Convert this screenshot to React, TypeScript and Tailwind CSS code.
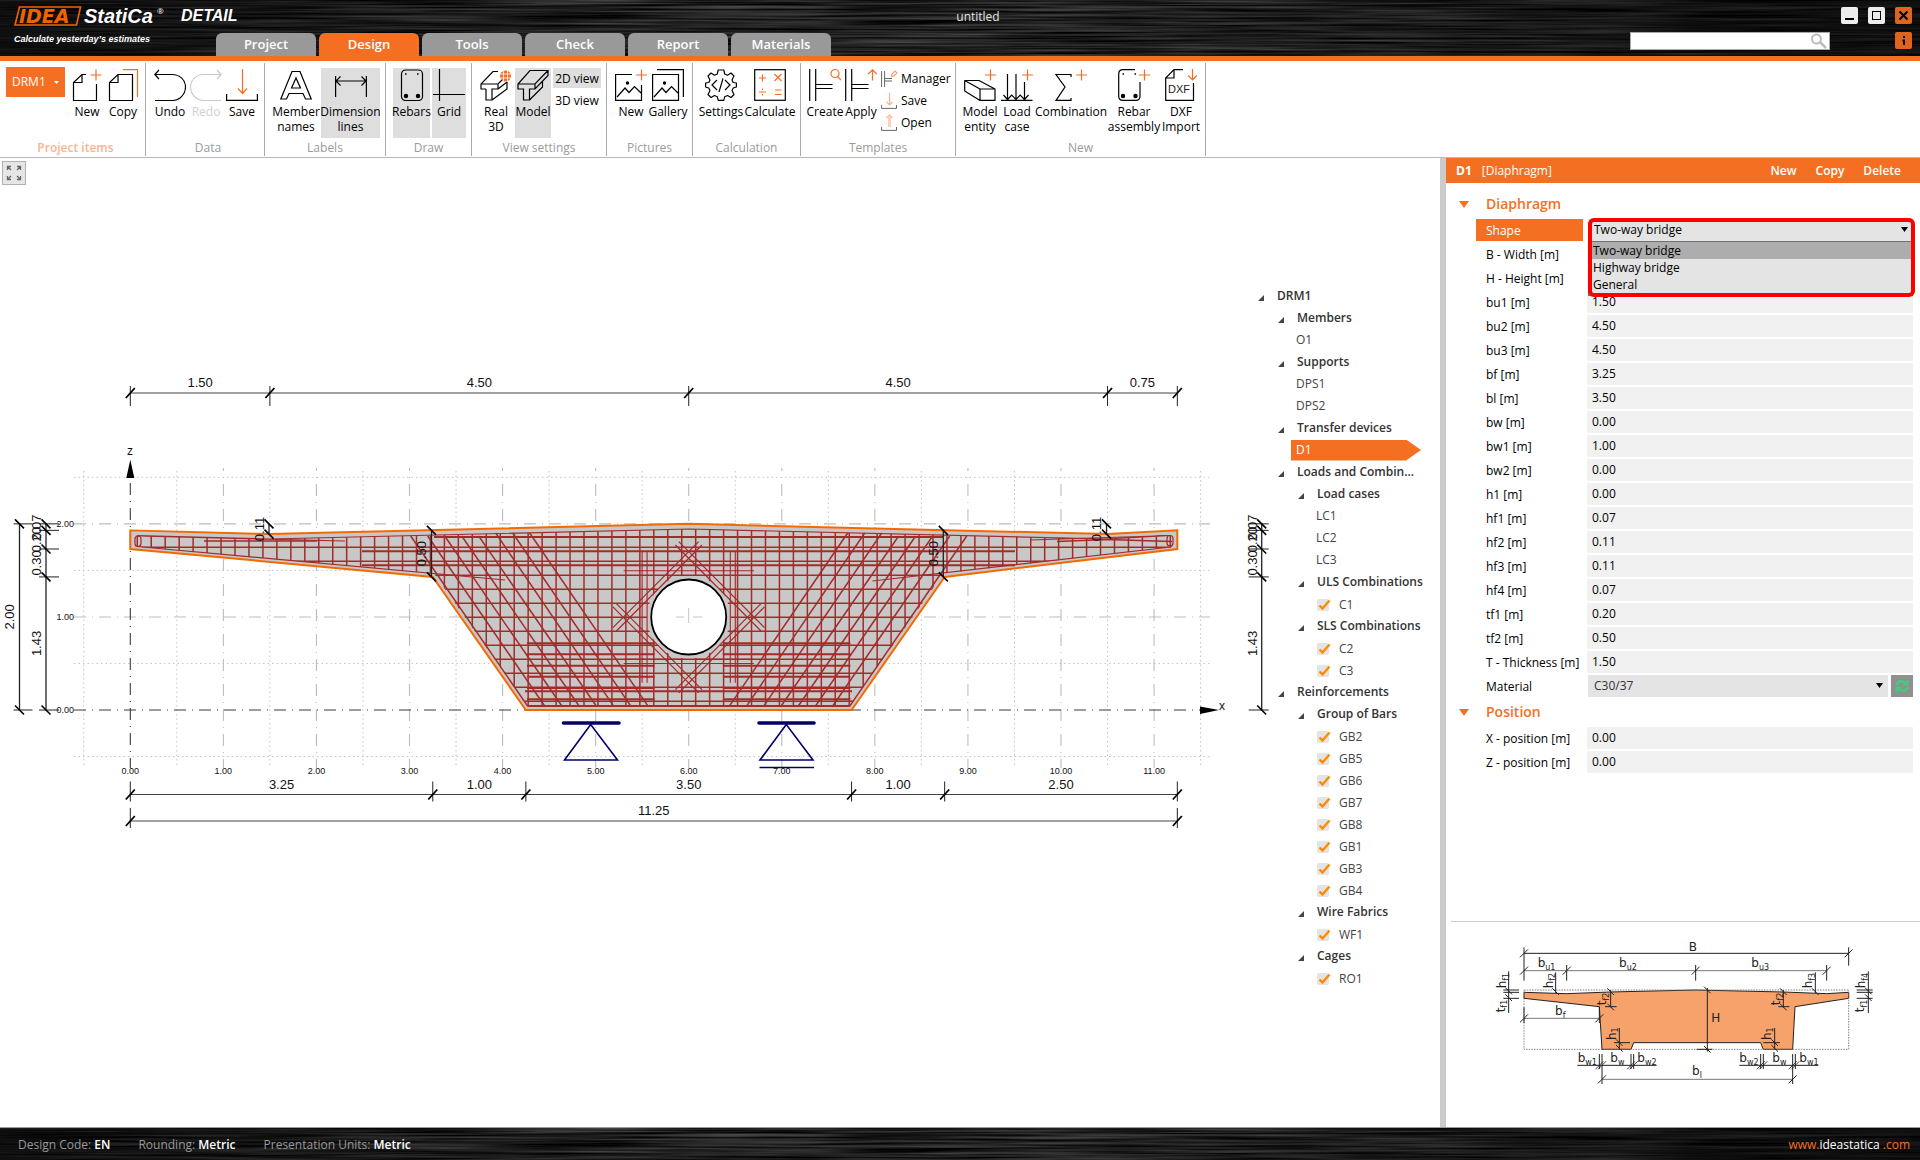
import React, { Fragment, ReactNode } from "react";

const ORANGE = "#f46f22";

/* ---------- Brushed metal used by the title bar and the status bar ---------- */
function Metal({ id }: { id: string }) {
  return (
    <svg className="absolute inset-0 h-full w-full" aria-hidden="true">
      <defs>
        <filter id={id} x="0" y="0" width="100%" height="100%" colorInterpolationFilters="sRGB">
          <feTurbulence type="fractalNoise" baseFrequency="0.006 0.45" numOctaves={3} seed={4} />
          <feColorMatrix values="0.5 0 0 0 -0.11  0.5 0 0 0 -0.11  0.5 0 0 0 -0.11  0 0 0 0 1" />
        </filter>
        <linearGradient id={id + "-shade"} x1="0" x2="1" y1="0" y2="0">
          <stop offset="0" stopColor="#000" stopOpacity="0.6" />
          <stop offset="0.35" stopColor="#000" stopOpacity="0.1" />
          <stop offset="0.6" stopColor="#000" stopOpacity="0.1" />
          <stop offset="1" stopColor="#000" stopOpacity="0.65" />
        </linearGradient>
      </defs>
      <rect width="100%" height="100%" fill="#161616" />
      <rect width="100%" height="100%" filter={`url(#${id})`} />
      <rect width="100%" height="100%" fill={`url(#${id}-shade)`} />
    </svg>
  );
}

/* ------------------------------- Ribbon icons ------------------------------- */
function Ico({ children, w = 32, h = 32 }: { children: ReactNode; w?: number; h?: number }) {
  return (
    <svg width={w} height={h} viewBox={`0 0 ${w} ${h}`} fill="none" stroke="#000" strokeWidth="1.2" className="shrink-0" aria-hidden="true">
      {children}
    </svg>
  );
}
const Plus = ({ x, y }: { x: number; y: number }) => <path d={`M${x - 5.5} ${y}h11M${x} ${y - 5.5}v11`} stroke={ORANGE} />;

const icons = {
  newItem: (
    <Ico>
      <path d="M15 5.500H11L2.500 13.500V31.500H25.500V15M11 5.500V13.500H2.500" />
      <Plus x={25} y={6} />
    </Ico>
  ),
  copy: (
    <Ico>
      <path d="M11 5.500H25.500V31.500H2.500V13.500ZM11 5.500V13.500H2.500" />
      <path d="M16 0.600H30.500V28" stroke={ORANGE} />
    </Ico>
  ),
  undo: (
    <Ico>
      <path d="M1 5.500H18C26 5.500 31.500 11 31.500 18S26 31.500 18 31.500H1M5 1L0.800 5.500L5 10" />
    </Ico>
  ),
  redo: (
    <Ico>
      <path stroke="#c8c8c8" d="M31 5.500H14C6 5.500 0.500 11 0.500 18S6 31.500 14 31.500H31M27 1L31.200 5.500L27 10" />
    </Ico>
  ),
  save: (
    <Ico>
      <path d="M0.600 25V31.400H31.400V25" />
      <path d="M16.500 0V24M12 19.500L16.500 24.500L21 19.500" stroke={ORANGE} />
    </Ico>
  ),
  member: (
    <Ico>
      <path d="M0.800 30L12 2.500H20L31.200 30H25.500L23 24.500H9L6.500 30ZM11.500 19L16 9L20.500 19Z" />
    </Ico>
  ),
  dimension: (
    <Ico>
      <path d="M0.600 7V28M31.400 7V28M1 12H31M5.500 7.500L1 12L5.500 16.500M26.500 7.500L31 12L26.500 16.500" />
    </Ico>
  ),
  rebars: (
    <Ico>
      <rect x="5.500" y="1" width="21" height="30.500" rx="4" />
      <circle cx="10" cy="27" r="1.600" fill="#000" />
      <circle cx="22" cy="27" r="1.600" fill="#000" />
      <path d="M9 5h1.500M21 5h1.500" strokeWidth="1.500" />
    </Ico>
  ),
  grid: (
    <Ico>
      <path d="M6.500 0V32M0 25.500H32" />
    </Ico>
  ),
  real3d: (
    <Ico>
      <path d="M18 2.500H13L1 15V20H6M1 15H18L22 11M18 15V20H12V31H6V20M18 20L27 13M12 31L27 20V13" />
      <circle cx="25.500" cy="7" r="5.500" fill={ORANGE} stroke="none" />
      <path d="M20 5H31M20 9H31M23.500 1.500V12.500M27.500 1.500V12.500" stroke="#fff" strokeWidth="0.800" />
    </Ico>
  ),
  model: (
    <Ico>
      <path d="M13 1.500H31V6.500L18 20H12.500V31H6.500V20H1V15L13 1.500ZM1 15H18L31 1.500M18 15V20M12.500 31L25.500 18V12" />
    </Ico>
  ),
  picNew: (
    <Ico>
      <path d="M17 5.500H0.600V31.400H26.500V16M2 28L10 19L14 23.500L19.500 17.500L26 24" />
      <circle cx="12.500" cy="14" r="1.700" fill="#000" stroke="none" />
      <Plus x={26.500} y={6} />
    </Ico>
  ),
  gallery: (
    <Ico>
      <path d="M0.600 5.500H26.500V31.400H0.600ZM5 0.600H31.400V28M2 28L10 19L14 23.500L19.500 17.500L26 24" />
      <circle cx="12.500" cy="14" r="1.700" fill="#000" stroke="none" />
    </Ico>
  ),
  settings: (
    <Ico>
      <path d="M13.2 1H18.800L19.700 5L22.500 6.200L26 4L29 7L27 11L28.200 13.500L31.400 14V18L28.200 19L27 21.500L29 25.500L26 28.500L22.500 26.500L19.700 27.700L18.800 31.400H13.200L12.300 27.700L9.500 26.500L6 28.500L3 25.500L5 21.500L3.800 19L0.600 18V14L3.800 13.500L5 11L3 7L6 4L9.500 6.200L12.300 5Z" strokeLinejoin="round" />
      <path d="M12 11L7 16L12 21M20 11L25 16L20 21M18 9.500L14 23" />
    </Ico>
  ),
  calculate: (
    <Ico>
      <rect x="0.700" y="0.700" width="30.600" height="30.600" />
      <path d="M5 9h7M8.500 5.500v7M20.500 5l7 7M27.500 5l-7 7M5 23h7M21 21h6.500M21 25.500h6.500M8.500 19.500v1.500M8.500 25v1.500" stroke={ORANGE} />
    </Ico>
  ),
  create: (
    <Ico>
      <path d="M0.700 0V32M6.700 0V32M6.700 15.500H23.500M6.700 19.500H23.500" />
      <circle cx="26" cy="4.500" r="4" stroke={ORANGE} />
      <path d="M28.500 7.500L32 11" stroke={ORANGE} />
    </Ico>
  ),
  apply: (
    <Ico>
      <path d="M0.700 0V32M6.700 0V32M6.700 15.500H23.500M6.700 19.500H23.500" />
      <path d="M27.500 1V11.500M23.200 5L27.500 0.800L31.800 5" stroke={ORANGE} />
    </Ico>
  ),
  entity: (
    <Ico>
      <path d="M0.700 11.500H15L31 20V31.400H16L0.700 22ZM0.700 11.500L16 20V31.400M16 20H31" strokeLinejoin="round" />
      <Plus x={26.500} y={6} />
    </Ico>
  ),
  load: (
    <Ico>
      <path d="M0 31.400H31.500M6.500 5V30M15 5V30M23.500 13V30M2.500 26L6.500 30.500L10.700 26L15 30.500L19.200 26L23.500 30.500L27.500 26" />
      <Plus x={26.500} y={6} />
    </Ico>
  ),
  combo: (
    <Ico>
      <path d="M16 8V5.500H1L10 18L1 31.400H16V29" />
      <Plus x={26.500} y={6} />
    </Ico>
  ),
  assembly: (
    <Ico>
      <path d="M17 0.700H5Q0.700 0.700 0.700 5V27Q0.700 31.400 5 31.400H18Q22 31.400 22 27V13" />
      <circle cx="5" cy="27" r="1.600" fill="#000" />
      <circle cx="17.500" cy="27" r="1.600" fill="#000" />
      <path d="M4.500 5H6M16.500 5H18" strokeWidth="1.500" />
      <Plus x={26.500} y={6} />
    </Ico>
  ),
  dxf: (
    <Ico>
      <path d="M18 0.700H9L0.700 9V31.400H28.500V14M9 0.700V9H0.700" />
      <text x="14" y="24" fontSize="11" textAnchor="middle" fill="#222" stroke="none" fontFamily="'Liberation Sans', sans-serif">DXF</text>
      <path d="M27.500 0V10.500M23.200 6.500L27.500 11L31.800 6.500" stroke={ORANGE} />
    </Ico>
  ),
  manager: (
    <Ico w={17} h={17}>
      <path d="M0.600 1V17M3.600 1V17M3.600 8.500H11M3.600 11H11" stroke="#666" strokeWidth="1" />
      <path d="M10.500 6.500L11 4L14 1L16 3L13 6Z" stroke="#f7a06c" />
    </Ico>
  ),
  saveSm: (
    <Ico w={17} h={17}>
      <path d="M0.600 13V16.400H15.500V13" stroke="#666" strokeWidth="1" />
      <path d="M8.500 1V12.500M5.500 10L8.500 13L11.500 10" stroke="#f7b48c" />
    </Ico>
  ),
  openSm: (
    <Ico w={17} h={17}>
      <path d="M0.600 13V16.400H15.500V13" stroke="#666" strokeWidth="1" />
      <path d="M8.500 3V13" stroke="#fbd3bd" strokeWidth="3" />
      <path d="M5.500 4L8.500 1L11.500 4" stroke="#f7b48c" />
    </Ico>
  ),
};

function Tool({ icon, label, className, on, off }: { icon: ReactNode; label: string; className: string; on?: boolean; off?: boolean }) {
  return (
    <button
      className={`flex h-[70px] shrink-0 flex-col items-center pt-px text-center leading-[15px] whitespace-pre ${on ? "bg-[#dedede]" : ""} ${off ? "text-[#d0d0d0]" : ""} ${className}`}
    >
      {icon}
      <span className="mt-[3px]">{label}</span>
    </button>
  );
}
function Group({ title, className, strong, children }: { title: string; className: string; strong?: boolean; children: ReactNode }) {
  return (
    <section className={`flex shrink-0 flex-col border-r border-[#ababab] ${className}`}>
      <div className="flex flex-1 pt-[5px]">{children}</div>
      <h2 className={`h-4 text-center leading-4 ${strong ? "font-semibold text-[#f9b48d]" : "text-[#9b9b9b]"}`}>{title}</h2>
    </section>
  );
}

function Ribbon() {
  return (
    <div className="flex h-[97px] shrink-0 border-b border-[#b9b9b9] bg-white pt-0.5 pb-px">
      <Group title="Project items" className="w-[146px] pl-1.5" strong>
        <button className="-mt-px mr-1 flex h-[30px] w-[59px] items-center justify-between bg-[#f46f22] px-1.5 text-white">
          DRM1
          <svg width="5" height="3" aria-hidden="true"><path d="M0 0H5L2.500 3Z" fill="#fff" /></svg>
        </button>
        <Tool icon={icons.newItem} label="New" className="w-9" />
        <Tool icon={icons.copy} label="Copy" className="w-9" />
      </Group>
      <Group title="Data" className="w-[119px] pl-1.5">
        <Tool icon={icons.undo} label="Undo" className="w-9" />
        <Tool icon={icons.redo} label="Redo" className="w-9" off />
        <Tool icon={icons.save} label="Save" className="w-9" />
      </Group>
      <Group title="Labels" className="w-[121px]">
        <Tool icon={icons.member} label={"Member\nnames"} className="ml-2 w-[46px]" />
        <Tool icon={icons.dimension} label={"Dimension\nlines"} className="ml-0.5 w-[59px]" on />
      </Group>
      <Group title="Draw" className="w-[86px]">
        <Tool icon={icons.rebars} label="Rebars" className="ml-[7px] w-[37px]" on />
        <Tool icon={icons.grid} label="Grid" className="ml-0.5 w-[34px]" on />
      </Group>
      <Group title="View settings" className="w-[135px]">
        <Tool icon={icons.real3d} label={"Real\n3D"} className="ml-2 w-8" />
        <Tool icon={icons.model} label="Model" className="ml-[3px] w-9" on />
        <div className="ml-0.5 flex flex-col gap-0.5">
          <button className="h-5 w-12 bg-[#dedede] pt-px whitespace-nowrap">2D view</button>
          <button className="h-5 w-12 pt-px whitespace-nowrap">3D view</button>
        </div>
      </Group>
      <Group title="Pictures" className="w-[86px]">
        <Tool icon={icons.picNew} label="New" className="ml-1.5 w-9" />
        <Tool icon={icons.gallery} label="Gallery" className="ml-px w-9" />
      </Group>
      <Group title="Calculation" className="w-[108px]">
        <Tool icon={icons.settings} label="Settings" className="ml-1 w-12" />
        <Tool icon={icons.calculate} label="Calculate" className="ml-px w-12" />
      </Group>
      <Group title="Templates" className="w-[155px]">
        <Tool icon={icons.create} label="Create" className="ml-1.5 w-9" />
        <Tool icon={icons.apply} label="Apply" className="w-9" />
        <div className="ml-0.5 flex flex-col gap-0.5">
          <button className="flex h-5 items-center gap-[3px] pt-px">{icons.manager}Manager</button>
          <button className="flex h-5 items-center gap-[3px] pt-px">{icons.saveSm}Save</button>
          <button className="flex h-5 items-center gap-[3px] pt-px">{icons.openSm}Open</button>
        </div>
      </Group>
      <Group title="New" className="w-[250px]">
        <Tool icon={icons.entity} label={"Model\nentity"} className="ml-1.5 w-9" />
        <Tool icon={icons.load} label={"Load\ncase"} className="ml-px w-9" />
        <Tool icon={icons.combo} label="Combination" className="ml-px w-[70px]" />
        <Tool icon={icons.assembly} label={"Rebar\nassembly"} className="ml-px w-[54px]" />
        <Tool icon={icons.dxf} label={"DXF\nImport"} className="w-10" />
      </Group>
    </div>
  );
}

/* --------------------------------- Title bar -------------------------------- */
const winBtn = "flex h-[17px] w-[17px] items-center justify-center rounded-xs";
function TitleBar() {
  return (
    <header className="relative flex h-[61px] shrink-0 items-end border-b-[5px] border-[#f46f22]">
      <Metal id="metal-top" />
      <svg width="216" height="56" className="relative shrink-0" role="img" aria-label="IDEA StatiCa">
        <path d="M19.500 7H80.500L76.500 25H15Z" fill="none" stroke="#f06400" strokeWidth="1.600" />
        <g fontStyle="italic" fontWeight="bold">
          <text x="19" y="23" fontSize="19" fill="#f06400" fontFamily="'DejaVu Sans', sans-serif">IDEA</text>
          <text x="84" y="23" fontSize="20" fill="#fff" fontFamily="'Liberation Sans', sans-serif">StatiCa</text>
          <text x="14" y="42" fontSize="9" fill="#fff" fontFamily="'Liberation Sans', sans-serif">Calculate yesterday’s estimates</text>
        </g>
        <text x="157" y="14" fontSize="8" fill="#fff">®</text>
      </svg>
      <span className="absolute top-1.5 left-[181px] font-['Liberation_Sans'] text-base leading-5 font-bold text-white italic">DETAIL</span>
      <nav className="relative flex gap-[3px] text-[13px] font-semibold text-white">
        {["Project", "Design", "Tools", "Check", "Report", "Materials"].map((t) => (
          <button key={t} className={`h-[23px] w-[100px] rounded-t-md pt-px ${t === "Design" ? "bg-[#f46f22]" : "bg-[#999999]"}`}>
            {t}
          </button>
        ))}
      </nav>
      <h1 className="absolute inset-x-0 top-2 pl-9 text-center text-xs leading-[17px] text-[#e4e4e4]">untitled</h1>
      <div className="relative ml-auto flex flex-col items-end gap-2 pr-2 pb-1.5">
        <div className="flex gap-2.5">
          <button aria-label="Minimize" className={`${winBtn} bg-[#ececec]`}>
            <svg width="17" height="17"><path d="M4 12H13" stroke="#000" strokeWidth="2" /></svg>
          </button>
          <button aria-label="Maximize" className={`${winBtn} bg-[#ececec]`}>
            <svg width="17" height="17"><rect x="4.500" y="4.500" width="8" height="8" fill="none" stroke="#000" /></svg>
          </button>
          <button aria-label="Close" className={`${winBtn} bg-[#df641e]`}>
            <svg width="17" height="17"><path d="M4.500 4.500L12.500 12.500M12.500 4.500L4.500 12.500" stroke="#000" strokeWidth="2" /></svg>
          </button>
        </div>
        <div className="flex gap-[65px]">
          <div className="relative">
            <input aria-label="Search" className="block h-[18px] w-[200px] border border-[#aaa] bg-white px-1 outline-none" />
            <svg width="18" height="18" className="absolute top-0 right-0.5" fill="none" stroke="#bdbdbd" strokeWidth="2" aria-hidden="true">
              <circle cx="6.500" cy="7" r="4.500" />
              <path d="M10 10L16 16" strokeWidth="2.500" />
            </svg>
          </div>
          <button aria-label="Info" className={`${winBtn} bg-[#df641e]`}>
            <svg width="17" height="17" fill="none" stroke="#000" strokeWidth="2"><path d="M9 4V6M7.500 8.500H9V13" /></svg>
          </button>
        </div>
      </div>
    </header>
  );
}

/* ------------------------------- Model drawing ------------------------------ */
const S = 93.070;
const X = (m: number) => 130.300 + m * S;
const Y = (m: number) => 710 - m * S;
const pts = (a: number[][]) => a.map((p) => p.join(",")).join(" ");

const outline = [[0, 1.93], [1.5, 1.89], [6, 2], [10.5, 1.89], [11.25, 1.93], [11.25, 1.73], [8.75, 1.43], [7.75, 0], [4.25, 0], [3.25, 1.43], [0, 1.73]].map(([a, b]) => [X(a), Y(b)]);
const inset = [
  [135, 535.500], [270, 539], [688.700, 529], [1107, 539], [1172.500, 535.500], [1172.500, 547], [943.400, 573.500], [849.400, 706.700],
  [528, 706.700], [434, 573.500], [135, 546.500],
];
const bars = [643.300, 654.300, 665.700, 676.700, 688, 699.300];
const seq = (n: number) => Array.from({ length: n }, (_, i) => i);

function HDim({ y, xs, labels }: { y: number; xs: number[]; labels: string[] }) {
  return (
    <g>
      <path d={`M${X(xs[0])} ${y}H${X(xs[xs.length - 1])}`} stroke="#444" strokeWidth="1.200" />
      {xs.map((m) => (
        <g key={m}>
          <path d={y > 700 ? `M${X(m)} ${y - 13}V${y + 7}` : `M${X(m)} ${y - 7}V${y + 13}`} stroke="#222" />
          <path d={`M${X(m) - 4.500} ${y + 5}L${X(m) + 4.500} ${y - 5}`} stroke="#000" strokeWidth="1.800" />
        </g>
      ))}
      {labels.map((t, i) => (
        <text key={i} x={X((xs[i] + xs[i + 1]) / 2)} y={y - 6} fontSize="13" textAnchor="middle">{t}</text>
      ))}
    </g>
  );
}
function VDim({ x, zs, labels, ext, tx = 5 }: { x: number; zs: number[]; labels: string[]; ext?: number[]; tx?: number }) {
  return (
    <g>
      <path d={`M${x} ${Y(zs[0])}V${Y(zs[zs.length - 1])}`} stroke="#222" strokeWidth="1.300" />
      {zs.map((m) => (
        <g key={m}>
          {ext && <path d={`M${x + ext[0]} ${Y(m)}H${x + ext[1]}`} stroke="#222" />}
          <path d={`M${x - 4.500} ${Y(m) - 4.500}L${x + 4.500} ${Y(m) + 4.500}`} stroke="#000" strokeWidth="1.600" />
        </g>
      ))}
      {labels.map((t, i) => {
        const cy = Y((zs[i] + zs[i + 1]) / 2);
        return <text key={i} x={x - tx} y={cy} fontSize="13" textAnchor="middle" transform={`rotate(-90 ${x - tx} ${cy})`}>{t}</text>;
      })}
    </g>
  );
}

function HalfRebars() {
  return (
    <g>
      {seq(8).map((k) => (
        <path key={k} d={`M${410.700 + 17 * k} ${k > 4 ? 533 : 536}L${528 + 17.200 * k} 706.700`} strokeWidth="1.500" />
      ))}
      {bars.map((y) => (
        <path key={y} d={`M527 ${y}H654.600`} strokeWidth="2" />
      ))}
      <path d="M642.100 551.700V682.700M647.100 551.700V682.700" strokeWidth="1.100" />
      <path d="M612.900 627.700L698.600 541.700M616.400 631L702 545M612.900 606.900L698.600 692.900M616.400 603.600L702 689.600" strokeWidth="1.200" />
    </g>
  );
}

function ModelView() {
  return (
    <svg viewBox="0 158 1248 900" preserveAspectRatio="xMinYMin meet" className="block h-auto w-full overflow-visible" fill="none" fontFamily="'Liberation Sans', sans-serif" role="img" aria-label="Cross-section of the diaphragm">
      <defs>
        <clipPath id="mesh">
          <path clipRule="evenodd" d={`M${inset.map((p) => p.join(" ")).join("L")}ZM647 617a41.700 41.700 0 1 0 83.400 0a41.700 41.700 0 1 0 -83.400 0Z`} />
        </clipPath>
      </defs>

      <g stroke="#c4c4c4">
        {seq(13).map((i) => <path key={i} d={`M${X(i - 0.5)} 471V767`} strokeDasharray="1.500 3" />)}
        {[2.5, 1.5, 0.5, -0.5].map((z) => <path key={z} d={`M74 ${Y(z)}H1210`} strokeDasharray="1.500 3" />)}
      </g>
      <g stroke="#bdbdbd" strokeWidth="1.100">
        {seq(11).map((i) => <path key={i} d={`M${X(i + 1)} 468V768`} strokeDasharray="12 6 1 6" strokeDashoffset="9" />)}
        {[2, 1].map((z) => <path key={z} d={`M74 ${Y(z)}H1210`} strokeDasharray="12 6 1 6" />)}
      </g>
      <g stroke="#3c3c3c" strokeWidth="1.100">
        <path d={`M${X(0)} 478V768`} strokeDasharray="12 6 1 6" strokeDashoffset="-5" />
        <path d={`M74 ${Y(0)}H1200`} strokeDasharray="12 6 1 6" />
      </g>
      <path d="M130.300 459.700L134.300 478H126.300ZM1219 710L1200 706.500V714Z" fill="#000" />
      <polygon points={pts(outline)} fill="#c8c8c8" />

      <g stroke="#a52a2a">
        <g clipPath="url(#mesh)" strokeWidth="1.500">
          {seq(40).map((k) => {
            const d = 6.980 + 13.960 * k;
            return <path key={k} d={`M${688.700 - d} 520V712M${688.700 + d} 520V712`} />;
          })}
          {seq(12).map((k) => <path key={k} d={`M130 ${547.300 + 14 * k}H1180`} />)}
        </g>
        <rect x="135" y="536" width="6" height="10.500" rx="3" strokeWidth="1.200" />
        <rect x="1167" y="535.500" width="6" height="10.500" rx="3" strokeWidth="1.200" />
        <path d="M137 536L345 541M137 535.500L270 539L688.700 529L1107 539L1171 535.500M1030 540L1171 535.500M137 546.500L505 580M1171 547L872.500 581" strokeWidth="1.200" />
        <path d="M204 541H317M1057 541.500L1107 539.500L1172 541.500" strokeWidth="1.600" />
        <HalfRebars />
        <g transform="translate(1377.400 0) scale(-1 1)"><HalfRebars /></g>
        <path d="M434 537H943M362 551.300H1015M362 565.300H1015M525 691.300H852M528 706H849" strokeWidth="2" />
        <path d="M623.600 570.700H754M623.600 575.500H754M623.600 659.300H754M623.600 663.500H754" strokeWidth="1.100" />
      </g>
      <circle cx="688.700" cy="617" r="37.500" fill="#fff" stroke="#000" strokeWidth="1.800" />
      <path d="M676 617H684M688.700 608V623M693 617H702" stroke="#c4c4c4" />
      <polygon points={pts(outline)} stroke="#f56a00" strokeWidth="2" />

      <g stroke="#00006b" strokeWidth="1.600">
        <path d="M563.500 723H619M759 723H814" strokeWidth="3.600" strokeLinecap="round" />
        <path d="M590.700 724.500L564.500 760H617.500ZM786.300 724.500L760 760H813ZM759.500 767.500H814" />
      </g>

      <g fill="#111">
        <HDim y={393} xs={[0, 1.5, 6, 10.5, 11.25]} labels={["1.50", "4.50", "4.50", "0.75"]} />
        <HDim y={794.500} xs={[0, 3.25, 4.25, 7.75, 8.75, 11.25]} labels={["3.25", "1.00", "3.50", "1.00", "2.50"]} />
        <HDim y={821} xs={[0, 11.25]} labels={["11.25"]} />
        <VDim x={19.500} zs={[2, 0]} labels={["2.00"]} ext={[-6, 13]} />
        <VDim x={46} zs={[2, 1.93, 1.73, 1.43, 0]} labels={["0.07", "0.20", "0.30", "1.43"]} ext={[-7, 13]} />
        <VDim x={1261.700} zs={[2, 1.93, 1.73, 1.43, 0]} labels={["0.07", "0.20", "0.30", "1.43"]} ext={[-13, 7]} />
        <VDim x={431.500} zs={[1.93, 1.43]} labels={["0.50"]} />
        <VDim x={943.300} zs={[1.93, 1.43]} labels={["0.50"]} />
        <VDim x={269} zs={[2, 1.89]} labels={["0.11"]} />
        <VDim x={1106.500} zs={[2, 1.89]} labels={["0.11"]} />
        <text x="130" y="455" fontSize="12" textAnchor="middle">z</text>
        <text x="1222" y="710" fontSize="12" textAnchor="middle">x</text>
        <g fontSize="9">
          {[2, 1, 0].map((z) => <text key={z} x="74" y={Y(z) + 3} textAnchor="end">{z.toFixed(2)}</text>)}
          {seq(12).map((i) => <text key={i} x={X(i)} y="774" textAnchor="middle">{i.toFixed(2)}</text>)}
        </g>
      </g>
    </svg>
  );
}

/* ----------------------------------- Tree ----------------------------------- */
type Node = { t: string; l: number; k: "g" | "i" | "c" };
const tree: Node[] = [
  { t: "DRM1", l: 0, k: "g" },
  { t: "Members", l: 1, k: "g" },
  { t: "O1", l: 1, k: "i" },
  { t: "Supports", l: 1, k: "g" },
  { t: "DPS1", l: 1, k: "i" },
  { t: "DPS2", l: 1, k: "i" },
  { t: "Transfer devices", l: 1, k: "g" },
  { t: "D1", l: 1, k: "i" },
  { t: "Loads and Combin...", l: 1, k: "g" },
  { t: "Load cases", l: 2, k: "g" },
  { t: "LC1", l: 2, k: "i" },
  { t: "LC2", l: 2, k: "i" },
  { t: "LC3", l: 2, k: "i" },
  { t: "ULS Combinations", l: 2, k: "g" },
  { t: "C1", l: 2, k: "c" },
  { t: "SLS Combinations", l: 2, k: "g" },
  { t: "C2", l: 2, k: "c" },
  { t: "C3", l: 2, k: "c" },
  { t: "Reinforcements", l: 1, k: "g" },
  { t: "Group of Bars", l: 2, k: "g" },
  ...["GB2", "GB5", "GB6", "GB7", "GB8", "GB1", "GB3", "GB4"].map((t): Node => ({ t, l: 2, k: "c" })),
  { t: "Wire Fabrics", l: 2, k: "g" },
  { t: "WF1", l: 2, k: "c" },
  { t: "Cages", l: 2, k: "g" },
  { t: "RO1", l: 2, k: "c" },
];
const indent = ["pl-2.5", "pl-[30px]", "pl-[50px]"];

function Tree() {
  return (
    <ul className="relative w-48 shrink-0 pt-[127px] text-[#444]">
      {tree.map((n) => (
        <li key={n.t} className={`flex h-[22px] items-center whitespace-nowrap ${indent[n.l]}`}>
          {n.k === "g" && (
            <>
              <svg width="6" height="6" className="mt-1 mr-[13px]" aria-hidden="true"><path d="M6 0V6H0Z" fill="#444" /></svg>
              <b className="font-semibold text-[#333]">{n.t}</b>
            </>
          )}
          {n.k === "i" && n.t !== "D1" && <span className="pl-[18px]">{n.t}</span>}
          {n.t === "D1" && (
            <button className="ml-[13px] h-[21px] w-[130px] bg-[#f46f22] pl-[5px] text-left text-white [clip-path:polygon(0_0,115px_0,130px_50%,115px_100%,0_100%)]">
              D1
            </button>
          )}
          {n.k === "c" && (
            <label className="flex items-center gap-2.5 pt-0.5 pl-[19px]">
              <span className="relative h-3 w-3">
                <input type="checkbox" defaultChecked className="block h-3 w-3 appearance-none rounded-xs bg-[#e4e4e4]" />
                <svg width="14" height="12" className="pointer-events-none absolute top-0 left-0" aria-hidden="true">
                  <path d="M2.500 6.500L5.500 9.500L12.500 1.500" fill="none" stroke="#ff8a00" strokeWidth="2.400" />
                </svg>
              </span>
              {n.t}
            </label>
          )}
        </li>
      ))}
    </ul>
  );
}

/* ------------------------------ Property panel ------------------------------ */
function Section({ title }: { title: string }) {
  return (
    <h3 className="flex items-center text-sm leading-5 font-semibold text-[#f46f22]">
      <svg width="10" height="7" className="mr-[17px]" aria-hidden="true"><path d="M0 0H10L5 7Z" fill={ORANGE} /></svg>
      {title}
    </h3>
  );
}
function Caret() {
  return (
    <svg width="7" height="5" className="pointer-events-none absolute top-2 right-[5px]" aria-hidden="true"><path d="M0 0H7L3.500 5Z" fill="#000" /></svg>
  );
}
function NumberRow({ label, value }: { label: string; value: string }) {
  const id = "p-" + label;
  return (
    <div className="flex h-[22px]">
      <label htmlFor={id} className="w-[111px] pt-px pl-2.5 leading-[22px] whitespace-nowrap">{label}</label>
      <input id={id} defaultValue={value} className="min-w-0 flex-1 bg-[#f1f1f1] px-[5px] outline-none" />
    </div>
  );
}
const fields: [string, string][] = [
  ["B - Width [m]", "11.25"],
  ["H - Height [m]", "2.00"],
  ["bu1 [m]", "1.50"],
  ["bu2 [m]", "4.50"],
  ["bu3 [m]", "4.50"],
  ["bf [m]", "3.25"],
  ["bl [m]", "3.50"],
  ["bw [m]", "0.00"],
  ["bw1 [m]", "1.00"],
  ["bw2 [m]", "0.00"],
  ["h1 [m]", "0.00"],
  ["hf1 [m]", "0.07"],
  ["hf2 [m]", "0.11"],
  ["hf3 [m]", "0.11"],
  ["hf4 [m]", "0.07"],
  ["tf1 [m]", "0.20"],
  ["tf2 [m]", "0.50"],
  ["T - Thickness [m]", "1.50"],
];

function Panel() {
  return (
    <aside className="flex w-[480px] shrink-0 flex-col border-l-[6px] border-[#cbcbcb]">
      <div className="flex h-[25px] shrink-0 items-center bg-[#f46f22] pr-[19px] pl-2.5 text-white">
        <b className="mr-2.5">D1</b>
        <span>[Diaphragm]</span>
        <div className="ml-auto flex gap-[19px] font-semibold">
          <button>New</button>
          <button>Copy</button>
          <button>Delete</button>
        </div>
      </div>
      <div className="pt-[11px] pr-[7px] pl-[13px]">
        <Section title="Diaphragm" />
        <div className="mt-[5px] ml-[17px] flex flex-col gap-0.5">
          <div className="flex h-[22px]">
            <label htmlFor="shape" className="w-[107px] bg-[#f46f22] pt-px pl-2.5 leading-[22px] text-white">Shape</label>
            <div className="relative ml-[5px] flex-1">
              <select id="shape" className="block h-[22px] w-full appearance-none bg-[#e4e4e4] pl-1.5 outline-none">
                <option>Two-way bridge</option>
                <option>Highway bridge</option>
                <option>General</option>
              </select>
              <Caret />
              <ul role="listbox" aria-label="Shape options" className="absolute inset-x-0 top-[22px] z-10 border border-[#707070] bg-[#e4e4e4] pb-0.5 leading-[17px]">
                <li role="option" aria-selected="true" className="bg-[#adadad] pl-1">Two-way bridge</li>
                <li role="option" aria-selected="false" className="pl-1">Highway bridge</li>
                <li role="option" aria-selected="false" className="pl-1">General</li>
              </ul>
              <div className="pointer-events-none absolute -top-px -right-0.5 left-0 z-20 h-[79px] rounded-md border-4 border-[#fe0000]" />
            </div>
          </div>
          {fields.map(([l, v]) => (
            <NumberRow key={l} label={l} value={v} />
          ))}
          <div className="flex h-[22px]">
            <label htmlFor="material" className="w-28 pt-px pl-2.5 leading-[22px]">Material</label>
            <div className="relative flex-1">
              <select id="material" className="block h-[22px] w-full appearance-none bg-[#e4e4e4] pl-1.5 text-[#333] outline-none">
                <option>C30/37</option>
              </select>
              <Caret />
            </div>
            <button aria-label="Edit material" className="ml-[3px] flex w-[22px] shrink-0 items-center justify-center bg-[#909090]">
              <svg width="14" height="14" className="shrink-0" fill="none" stroke="#3fce7c" strokeWidth="2.400" aria-hidden="true">
                <path d="M1.500 6C2.500 1.500 8.500 1 11 4.500M12.500 8C11.500 12.500 5.500 13 3 9.500" />
                <path d="M12.500 1V5.500H8M1.500 13V8.500H6" strokeWidth="2" />
              </svg>
            </button>
          </div>
        </div>
        <div className="h-[5px]" />
        <Section title="Position" />
        <div className="mt-[5px] ml-[17px] flex flex-col gap-0.5">
          <NumberRow label="X - position [m]" value="0.00" />
          <NumberRow label="Z - position [m]" value="0.00" />
        </div>
      </div>
      <div className="mt-auto ml-[5px] h-[206px] border-t border-[#cfcfcf]">
        <Scheme />
      </div>
    </aside>
  );
}

/* Parametric scheme of the section; drawn at three units to the pixel. */
function Sub({ x, y, a, b, v }: { x: number; y: number; a: string; b?: string; v?: boolean }) {
  return (
    <text x={x} y={y} fontSize="36" transform={v ? `rotate(-90 ${x} ${y})` : undefined}>
      {a}
      {b && <tspan fontSize="24" dy="8">{b}</tspan>}
    </text>
  );
}
function Scheme() {
  const slash = (x: number, y: number) => `M${x - 12} ${y + 12}L${x + 12} ${y - 12}`;
  const back = (x: number, y: number) => `M${x - 10} ${y - 10}L${x + 10} ${y + 10}`;
  return (
    <svg width="420" height="188" viewBox="0 39 1260 564" className="ml-[19px]" fontFamily="'DejaVu Sans', sans-serif" role="img" aria-label="Section parameters">
      <path d="M162 250L290 254L420 249L677 243L940 249L1070 254L1136 250V268L975 293L968 421H880L872 401H491L483 421H396L388 293L162 268Z" fill="#f7a16b" stroke="#222" strokeWidth="3" />
      <g fill="none" stroke="#777" strokeWidth="3">
        <path d="M162 243H1136M162 243V421H1136V243" strokeDasharray="5 3" strokeWidth="2.500" />
        <path d="M162 185H1070M162 328H388M396 511H968" />
      </g>
      <g fill="none" stroke="#222" strokeWidth="3">
        <path d="M162 133H1136M162 115V215M1136 115V170M290 168V215M677 168V215M1070 168V215M162 295V342M388 293V342" />
        <path d="M712 237V428M680 421H727M422 243V295M405 293H440M940 243V295M925 293H958" />
        <path d="M116 187V312M100 243H147M100 250H147M100 268H147M1195 187V312M1160 243H1208M1160 250H1208M1160 268H1208" />
        <path d="M257 190V252M1036 190V252M448 357V421M432 401H480M914 357V421M880 401H930" />
        <path d="M322 469H560M808 469H1045M388 435V480M396 435V525M483 435V480M491 435V480M872 435V480M880 435V480M968 435V525M976 435V480" />
        <path d={[slash(162, 133), slash(1136, 133), slash(162, 185), slash(290, 185), slash(677, 185), slash(1070, 185), slash(162, 328), slash(388, 328), slash(396, 511), slash(968, 511)].join("")} />
        <path d={[back(712, 243), back(712, 421), back(422, 248), back(422, 294), back(940, 248), back(940, 294), back(116, 246), back(116, 266), back(1195, 246), back(1195, 266), back(257, 248), back(1036, 248), back(448, 401), back(448, 418), back(914, 401), back(914, 418)].join("")} />
        <path d={[388, 396, 483, 491, 872, 880, 968, 976].map((x) => slash(x, 469)).join("")} strokeWidth="2.500" />
      </g>
      <g fill="#222">
        <Sub x={656} y={126} a="B" />
        <Sub x={203} y={174} a="b" b="u1" />
        <Sub x={447} y={174} a="b" b="u2" />
        <Sub x={844} y={174} a="b" b="u3" />
        <Sub x={255} y={319} a="b" b="f" />
        <Sub x={724} y={339} a="H" />
        <Sub x={666} y={498} a="b" b="l" />
        <Sub x={323} y={459} a="b" b="w1" />
        <Sub x={421} y={459} a="b" b="w" />
        <Sub x={502} y={459} a="b" b="w2" />
        <Sub x={808} y={459} a="b" b="w2" />
        <Sub x={907} y={459} a="b" b="w" />
        <Sub x={988} y={459} a="b" b="w1" />
        <Sub x={108} y={238} a="h" b="f1" v />
        <Sub x={104} y={310} a="t" b="f1" v />
        <Sub x={248} y={238} a="h" b="f2" v />
        <Sub x={1026} y={238} a="h" b="f3" v />
        <Sub x={1185} y={238} a="h" b="f4" v />
        <Sub x={1183} y={310} a="t" b="f1" v />
        <Sub x={408} y={289} a="t" b="f2" v />
        <Sub x={930} y={289} a="t" b="f2" v />
        <Sub x={437} y={393} a="h" b="1" v />
        <Sub x={902} y={393} a="h" b="1" v />
      </g>
    </svg>
  );
}

const status = [["Design Code:", "EN"], ["Rounding:", "Metric"], ["Presentation Units:", "Metric"]];

export default function App() {
  return (
    <div className="flex min-h-screen flex-col bg-white font-['Open_Sans','Noto_Sans',sans-serif] text-xs text-black">
      <TitleBar />
      <Ribbon />
      <main className="flex flex-1">
        <div className="relative min-w-0 flex-1">
          <ModelView />
          <button aria-label="Zoom to fit" className="absolute top-[3px] left-0.5 border border-[#b0b0b0] bg-[#e6e6e6]">
            <svg width="22" height="22" fill="none" stroke="#666" strokeWidth="1.300" aria-hidden="true">
              <path d="M4.500 8V4.500H8M4.500 4.500L8 8M14 4.500H17.500V8M17.500 4.500L14 8M4.500 14V17.500H8M4.500 17.500L8 14M14 17.500H17.500V14M17.500 17.500L14 14" />
            </svg>
          </button>
        </div>
        <Tree />
        <Panel />
      </main>
      <footer className="relative flex h-[33px] shrink-0 items-center border-t border-[#999] px-[18px] pt-px text-[#999]">
        <Metal id="metal-bottom" />
        <div className="relative flex gap-7">
          {status.map(([k, v]) => (
            <Fragment key={k}>
              <span>
                {k} <b className="font-semibold text-white">{v}</b>
              </span>
            </Fragment>
          ))}
        </div>
        <a href="#site" className="relative -mr-2 ml-auto text-[#f46f22]">
          www.<span className="text-white">ideastatica</span> .com
        </a>
      </footer>
    </div>
  );
}
